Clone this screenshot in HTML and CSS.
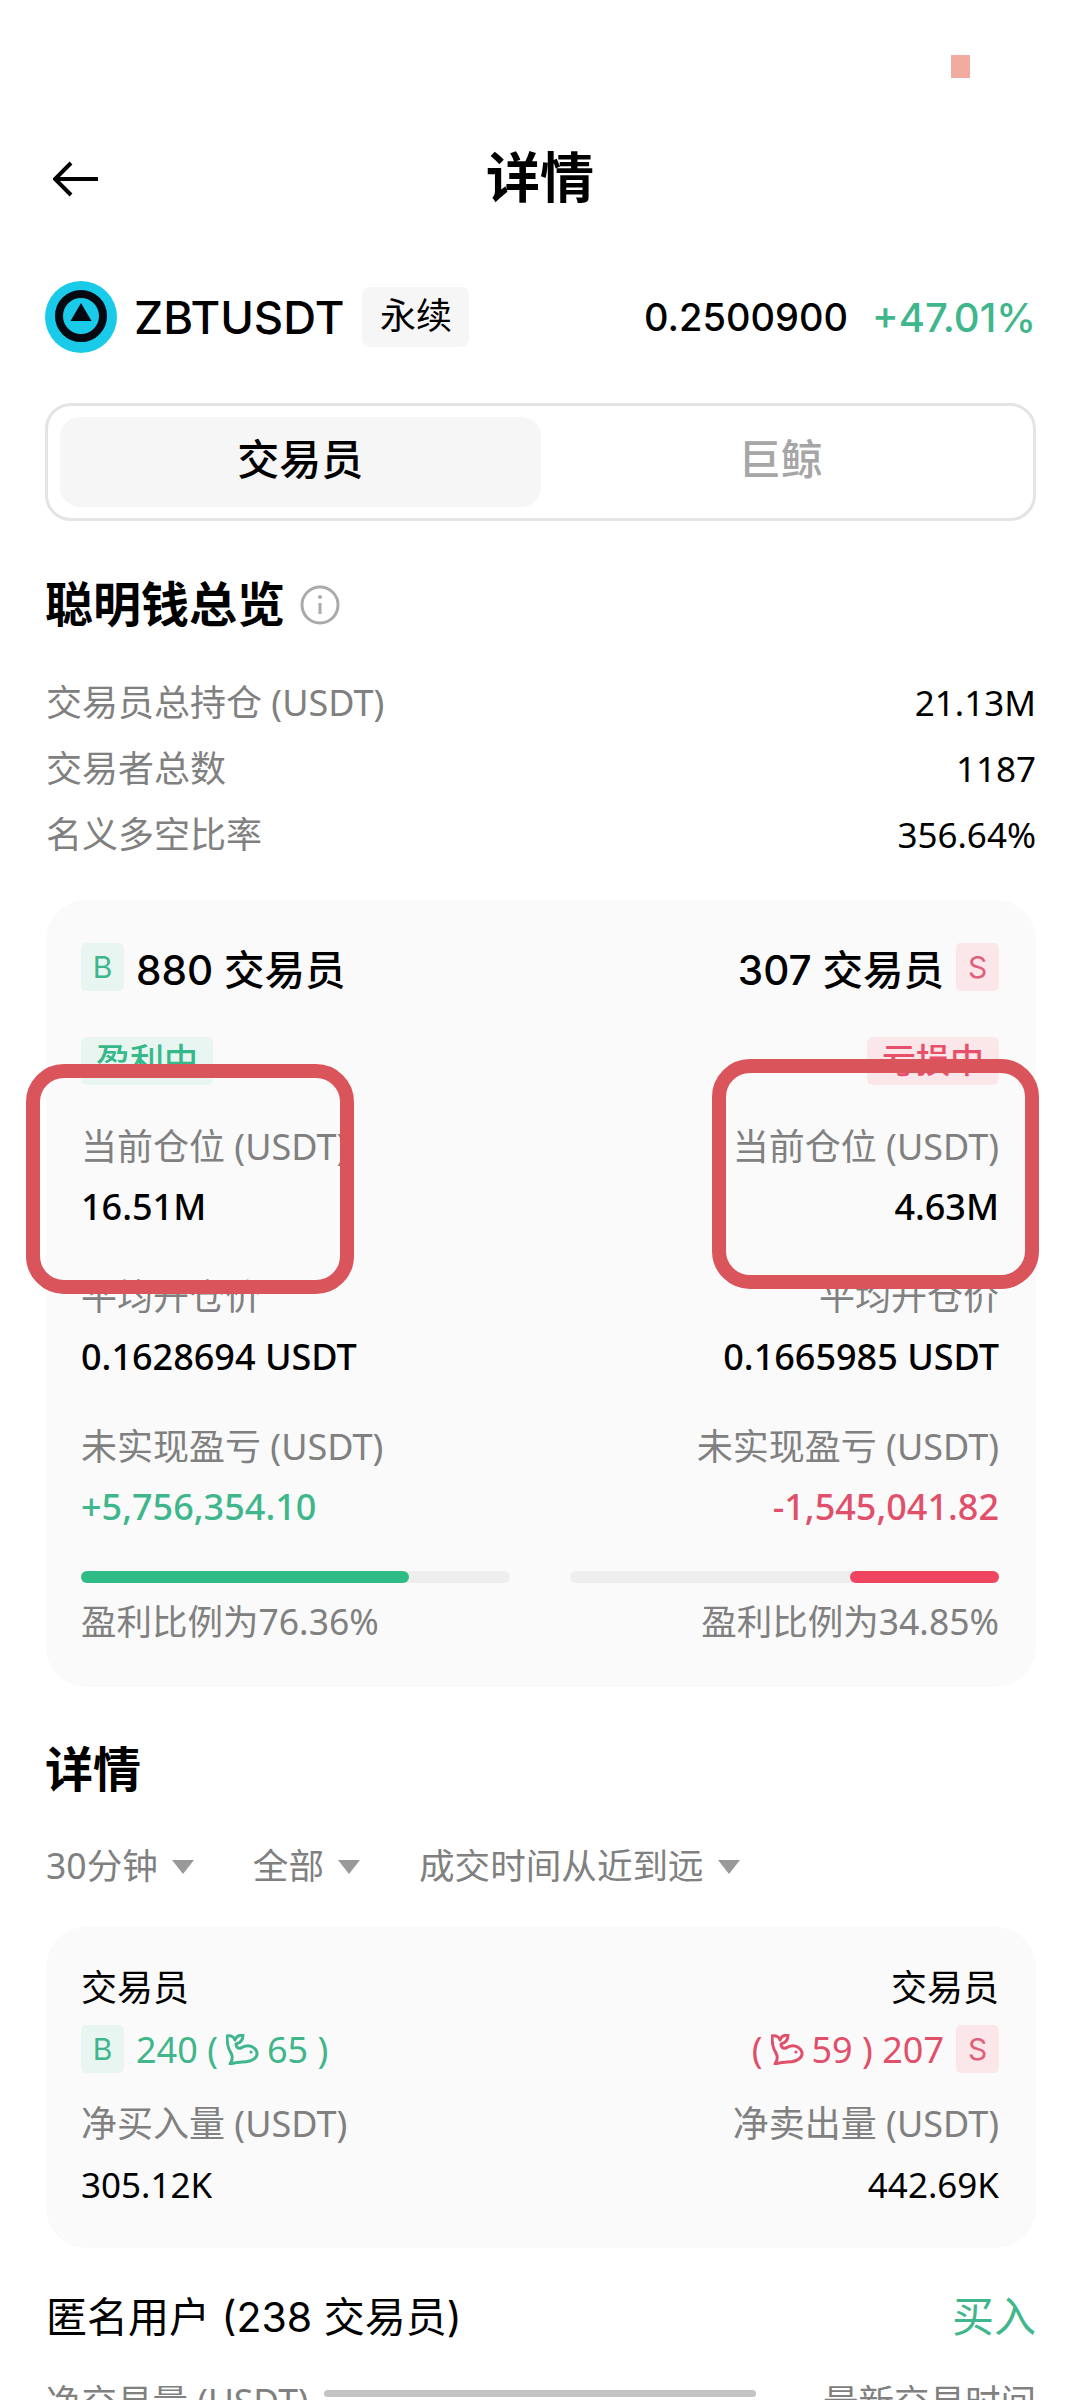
FILE: index.html
```html
<!DOCTYPE html>
<html lang="zh">
<head>
<meta charset="utf-8">
<title>详情</title>
<link rel="stylesheet" href="styles.css">
</head>
<body>
<div class="page">
	<div class="status"><span class="status-dot"></span></div>

	<div class="topbar">
		<svg class="back" viewBox="0 0 46 36" width="46" height="36"><path d="M45 18H3M18 2 2 18l16 16" fill="none" stroke="#000" stroke-width="4"/></svg>
		<div class="topbar-title">详情</div>
	</div>

	<div class="ticker">
		<svg class="coin" viewBox="0 0 72 72" width="72" height="72">
			<circle cx="36" cy="36" r="36" fill="#19cbe8"/>
			<circle cx="36" cy="35" r="22" fill="none" stroke="#050a12" stroke-width="8"/>
			<path d="M36 22 46.500 40h-21z" fill="#050a12"/>
		</svg>
		<span class="symbol">ZBTUSDT</span>
		<span class="perp">永续</span>
		<span class="price">0.2500900</span>
		<span class="change">+47.01%</span>
	</div>

	<div class="tabs">
		<div class="tab active">交易员</div>
		<div class="tab">巨鲸</div>
	</div>

	<div class="heading overview-title">聪明钱总览
		<svg class="info" viewBox="0 0 40 40" width="40" height="40"><circle cx="20" cy="20" r="18" fill="none" stroke="#aaa" stroke-width="3"/><path d="M20 18v11" stroke="#aaa" stroke-width="3"/><circle cx="20" cy="12" r="2" fill="#aaa"/></svg>
	</div>

	<div class="stats">
		<div class="stat"><span>交易员总持仓 (USDT)</span><b>21.13M</b></div>
		<div class="stat"><span>交易者总数</span><b>1187</b></div>
		<div class="stat"><span>名义多空比率</span><b>356.64%</b></div>
	</div>

	<div class="card summary">
		<div class="col">
			<div class="side-head"><span class="badge buy">B</span><span>880 交易员</span></div>
			<div class="tag-row"><span class="tag buy">盈利中</span></div>
			<div class="label first">当前仓位 (USDT)</div>
			<div class="value">16.51M</div>
			<div class="label">平均开仓价</div>
			<div class="value">0.1628694 USDT</div>
			<div class="label">未实现盈亏 (USDT)</div>
			<div class="value up">+5,756,354.10</div>
			<div class="bar"><div class="fill buy" style="width:76.36%"></div></div>
			<div class="ratio">盈利比例为76.36%</div>
		</div>
		<div class="col right">
			<div class="side-head"><span>307 交易员</span><span class="badge sell">S</span></div>
			<div class="tag-row"><span class="tag sell">亏损中</span></div>
			<div class="label first">当前仓位 (USDT)</div>
			<div class="value">4.63M</div>
			<div class="label">平均开仓价</div>
			<div class="value">0.1665985 USDT</div>
			<div class="label">未实现盈亏 (USDT)</div>
			<div class="value down">-1,545,041.82</div>
			<div class="bar"><div class="fill sell" style="width:34.85%"></div></div>
			<div class="ratio">盈利比例为34.85%</div>
		</div>
	</div>

	<div class="heading detail-title">详情</div>

	<div class="filters">
		<div class="filter">30分钟<i></i></div>
		<div class="filter">全部<i></i></div>
		<div class="filter">成交时间从近到远<i></i></div>
	</div>

	<div class="card flow">
		<div class="col">
			<div class="who">交易员</div>
			<div class="count up"><span class="badge buy">B</span><span>240 (</span>
				<svg class="whale" viewBox="0 0 33 31" width="33" height="31"><path d="M1 2c4-1 7 1 8 4 1-3 4-5 8-5 0 5-3 8-7 9 0 3 2 5 5 4 4-3 10-3 13 0 3 2 4 6 2 9-3 4-8 5-14 5-4 0-8 1-12 2 3-4 3-7 1-11C2 15 1 8 1 2z" fill="none" stroke="currentColor" stroke-width="3" stroke-linejoin="round"/><circle cx="25" cy="18" r="1.600" fill="currentColor"/></svg>
				<span>65 )</span></div>
			<div class="label">净买入量 (USDT)</div>
			<div class="value plain">305.12K</div>
		</div>
		<div class="col right">
			<div class="who">交易员</div>
			<div class="count down"><span>(</span>
				<svg class="whale" viewBox="0 0 33 31" width="33" height="31"><path d="M1 2c4-1 7 1 8 4 1-3 4-5 8-5 0 5-3 8-7 9 0 3 2 5 5 4 4-3 10-3 13 0 3 2 4 6 2 9-3 4-8 5-14 5-4 0-8 1-12 2 3-4 3-7 1-11C2 15 1 8 1 2z" fill="none" stroke="currentColor" stroke-width="3" stroke-linejoin="round"/><circle cx="25" cy="18" r="1.600" fill="currentColor"/></svg>
				<span>59 ) 207</span><span class="badge sell">S</span></div>
			<div class="label">净卖出量 (USDT)</div>
			<div class="value plain">442.69K</div>
		</div>
	</div>

	<div class="anon">
		<span>匿名用户 (238 交易员)</span>
		<span class="buy-link">买入</span>
	</div>

	<div class="table-head">
		<span>净交易量 (USDT)</span>
		<span>最新交易时间</span>
	</div>
	<div class="scroll-thumb"></div>

	<!-- red marker frames drawn over the summary card -->
	<div class="frame frame-left"></div>
	<div class="frame frame-right"></div>
</div>
</body>
</html>
```

FILE: styles.css
```css
* { box-sizing: border-box; }
html, body { margin: 0; padding: 0; background: #fff; }
body {
	font-family: Inter, "Noto Sans CJK SC", sans-serif;
	color: #000;
}
.page {
	position: relative;
	width: 1080px;
	height: 2400px;
	overflow: hidden;
	padding: 0 44px 0 46px;
}

.status {
	display: flex;
	justify-content: flex-end;
	height: 129px;
	padding: 55px 66px 0 0;
}
.status-dot {
	width: 19px;
	height: 23px;
	background: #f2aba0;
}

.topbar {
	display: flex;
	align-items: center;
	justify-content: center;
	position: relative;
	height: 100px;
}
.back { position: absolute; left: 7px; top: 32px; }
.topbar-title {
	font-size: 54px;
	font-weight: 700;
	line-height: 100px;
	margin-right: 2px;
}

.ticker {
	display: flex;
	align-items: center;
	height: 72px;
	margin-top: 52px;
	margin-left: -1px;
}
.coin { flex: none; }
.symbol {
	font-size: 45.500px;
	font-weight: 500;
	margin-left: 17px;
}
.perp {
	display: block;
	width: 107px;
	height: 60px;
	margin-left: 18px;
	border-radius: 8px;
	background: #f6f6f6;
	font-size: 36px;
	line-height: 58px;
	text-align: center;
}
.price {
	margin-left: auto;
	font-size: 38px;
	font-weight: 500;
}
.change {
	margin-left: 24px;
	font-size: 40px;
	font-weight: 500;
	color: #3fb68b;
}

.tabs {
	display: flex;
	height: 118px;
	margin: 50px 0 0 -1px;
	padding: 11px 12px;
	border: 3px solid #e4e4e4;
	border-radius: 26px;
}
.tab {
	width: 481px;
	height: 90px;
	border-radius: 20px;
	font-size: 42px;
	font-weight: 500;
	line-height: 86px;
	text-align: center;
	color: #a6a6a6;
}
.tab.active { background: #f6f6f6; color: #000; }

.heading {
	font-size: 48px;
	font-weight: 700;
	line-height: 60px;
	margin-left: -1px;
}
.overview-title {
	display: flex;
	align-items: center;
	gap: 15px;
	margin-top: 54px;
}

.stats { margin-top: 35px; }
.stat {
	display: flex;
	justify-content: space-between;
	height: 66px;
	font-family: "Noto Sans", "Noto Sans CJK SC", sans-serif;
	font-size: 36px;
	line-height: 66px;
	color: #808080;
}
.stat b {
	font-size: 35px;
	font-weight: 400;
	color: #000;
}

.card {
	display: grid;
	grid-template-columns: 429px 429px;
	gap: 60px;
	padding: 36px 35px;
	border-radius: 40px;
	background: #fafafa;
}
.summary {
	height: 787px;
	margin-top: 32px;
	padding-top: 43px;
}
.col { min-width: 0; }
.col.right { text-align: right; }

.side-head {
	display: flex;
	align-items: center;
	gap: 12px;
	height: 48px;
	font-size: 40.500px;
	font-weight: 500;
}
.right .side-head { justify-content: flex-end; }

.badge {
	display: block;
	flex: none;
	width: 43px;
	height: 48px;
	border-radius: 5px;
	font-family: Inter, sans-serif;
	font-size: 30px;
	font-weight: 400;
	line-height: 48px;
	text-align: center;
}
.badge.buy { background: #e8f5f0; color: #3fb68b; }
.badge.sell { background: #fbe7ea; color: #e0607a; }

.tag-row { height: 48px; margin-top: 46px; }
.tag {
	display: inline-block;
	width: 132px;
	height: 48px;
	border-radius: 6px;
	font-size: 34px;
	font-weight: 500;
	line-height: 48px;
	text-align: center;
}
.tag.buy { background: #e8f5f0; color: #35b98a; }
.tag.sell { background: #fbe7ea; color: #e8506a; }

.label {
	margin-top: 40px;
	font-family: "Noto Sans", "Noto Sans CJK SC", sans-serif;
	font-size: 36px;
	line-height: 50px;
	color: #808080;
	white-space: nowrap;
}
.label.first { margin-top: 37px; }
.value {
	margin-top: 10px;
	font-family: "Noto Sans", sans-serif;
	font-size: 36px;
	font-weight: 500;
	line-height: 50px;
	white-space: nowrap;
}
.value.plain { font-weight: 400; font-size: 35px; }
.up { color: #3fb68b; }
.down { color: #e0506a; }

.bar {
	display: flex;
	height: 12px;
	margin-top: 39px;
	border-radius: 6px;
	background: #eeeeee;
}
.right .bar { justify-content: flex-end; }
.fill { border-radius: 6px; }
.fill.buy { background: #2fbb85; }
.fill.sell { background: #ef4560; }
.ratio {
	margin-top: 13px;
	font-family: "Noto Sans", "Noto Sans CJK SC", sans-serif;
	font-size: 35.500px;
	line-height: 50px;
	color: #808080;
}

.detail-title { margin-top: 53px; }

.filters {
	display: flex;
	gap: 59px;
	margin-top: 40px;
	font-family: "Noto Sans", "Noto Sans CJK SC", sans-serif;
	font-size: 35.600px;
	line-height: 50px;
	color: #808080;
}
.filter { display: flex; align-items: center; gap: 14px; }
.filter i {
	display: block;
	width: 0;
	height: 0;
	border-left: 11px solid transparent;
	border-right: 11px solid transparent;
	border-top: 14px solid #999;
	margin-top: 4px;
}

.flow {
	height: 321px;
	margin-top: 37px;
}
.who {
	font-size: 36px;
	line-height: 50px;
}
.count {
	display: flex;
	align-items: center;
	gap: 12px;
	height: 48px;
	margin-top: 12px;
	font-family: "Noto Sans", sans-serif;
	font-size: 36px;
}
.right .count { justify-content: flex-end; }
.count .whale { margin: 0 -4px; }
.flow .label { margin-top: 26px; }
.flow .value { margin-top: 11px; }

.anon {
	display: flex;
	justify-content: space-between;
	margin-top: 39px;
	font-size: 41px;
	line-height: 60px;
}
.buy-link { color: #3fb68b; font-size: 42px; }

.table-head {
	display: flex;
	justify-content: space-between;
	margin-top: 29px;
	font-family: "Noto Sans", "Noto Sans CJK SC", sans-serif;
	font-size: 35.500px;
	line-height: 50px;
	color: #808080;
}
.scroll-thumb {
	position: absolute;
	left: 324px;
	top: 2390px;
	width: 432px;
	height: 7px;
	border-radius: 4px;
	background: #c4c4c4;
}

.frame {
	position: absolute;
	border: 14px solid #d9545b;
	border-radius: 38px;
}
.frame-left { left: 26px; top: 1064px; width: 328px; height: 230px; }
.frame-right { left: 712px; top: 1059px; width: 327px; height: 230px; }
```
